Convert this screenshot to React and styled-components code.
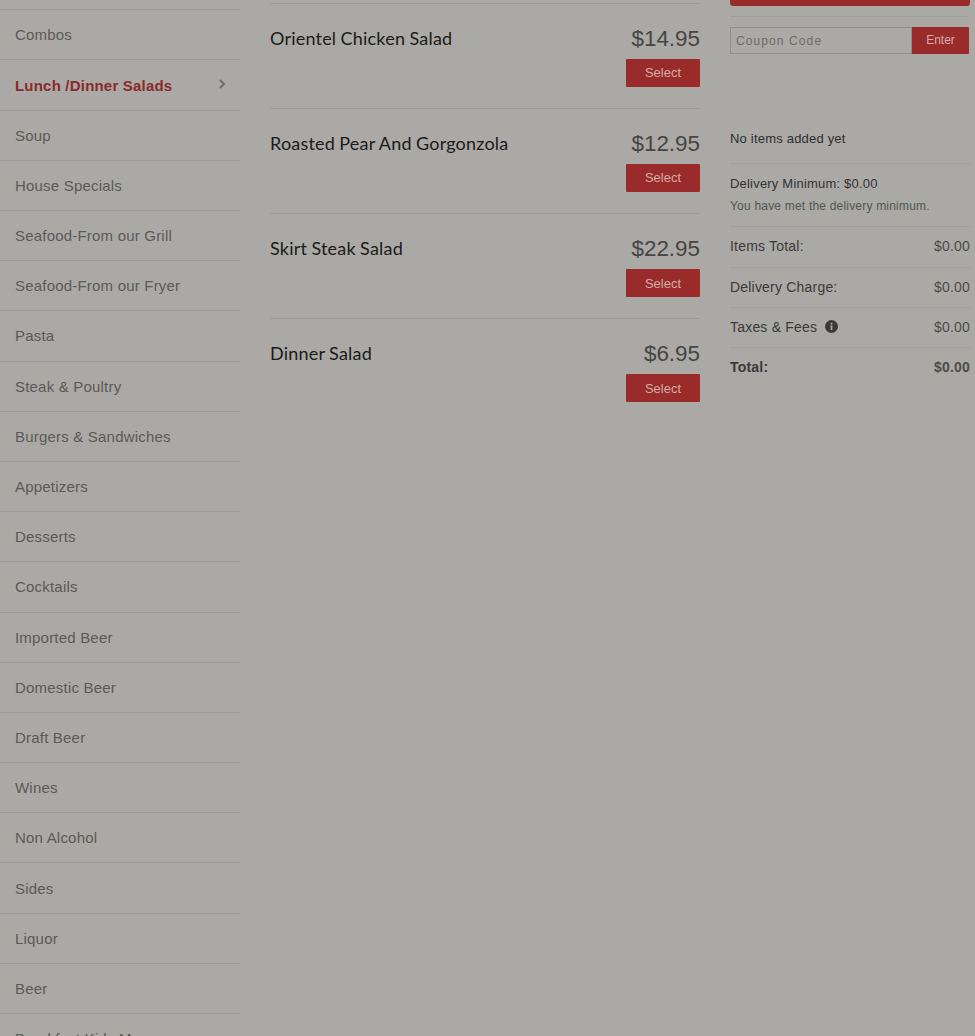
import React from "react";
import styled, { createGlobalStyle } from "styled-components";

const Global = createGlobalStyle`
  html, body { margin: 0; padding: 0; height: 1036px; overflow: hidden; background: #aaa9a5; }
  body { font-family: "Liberation Sans", Arial, sans-serif; }
`;

const Page = styled.div`
  display: flex;
  align-items: flex-start;
  height: 1036px;
  overflow: hidden;
`;

const Sidebar = styled.nav`
  flex: 0 0 240px;
  padding-top: 9.3px;
`;

const NavRow = styled.div`
  display: flex;
  align-items: center;
  justify-content: space-between;
  box-sizing: border-box;
  height: 50.19px;
  padding: 0 13px 0.12px 15px;
  border-top: 1px solid #9e9d99;
  font-size: 15px;
  letter-spacing: 0.2px;
  color: ${(p) => (p.$active ? "#8a2a2b" : "#5a5a58")};
  font-weight: ${(p) => (p.$active ? 700 : 400)};
`;

const Chevron = styled.svg`
  width: 10px;
  height: 10px;
  margin-top: -3px;
`;

const Menu = styled.main`
  flex: 0 0 430px;
  margin-left: 30px;
  padding-top: 2.8px;
`;

const Dish = styled.article`
  display: flex;
  justify-content: space-between;
  box-sizing: border-box;
  height: 105.2px;
  padding-top: 20px;
  border-top: 1px solid #9e9d99;
`;

const DishName = styled.h3`
  margin: 0;
  font-family: Lato, sans-serif;
  font-size: 18px;
  line-height: 28px;
  font-weight: 400;
  letter-spacing: 0.2px;
  word-spacing: -0.5px;
  color: #1b1b1b;
`;

const DishBuy = styled.div`
  display: flex;
  flex-direction: column;
  align-items: flex-end;
  gap: 6px;
`;

const Price = styled.div`
  padding-top: 1px;
  font-size: 22.4px;
  line-height: 28px;
  color: #454543;
`;

const SelectButton = styled.button`
  width: 74px;
  height: 28px;
  padding: 0 0 0.2px;
  border: 0;
  border-radius: 1px;
  background: #992c2a;
  color: #d4aca8;
  font-family: inherit;
  font-size: 13px;
`;

const Cart = styled.aside`
  flex: 0 0 240px;
  margin-left: 30px;
`;

const CheckoutStub = styled.div`
  height: 6px;
  background: #992c2a;
  border-radius: 0 0 3px 3px;
`;

const CouponBlock = styled.div`
  display: flex;
  margin-top: 10px;
  padding-top: 10px;
  border-top: 1px solid #a09f9b;
  width: 239px;
`;

const CouponInput = styled.div`
  flex: 1;
  box-sizing: border-box;
  height: 27px;
  padding-left: 5px;
  border: 1px solid #8f8e8a;
  font-size: 12px;
  line-height: 26px;
  letter-spacing: 1.1px;
  color: #6e6d6a;
`;

const EnterButton = styled.button`
  width: 57px;
  height: 27px;
  padding: 0 0 2px;
  border: 0;
  border-radius: 0 1px 1px 0;
  background: #992c2a;
  color: #d4aca8;
  font-family: inherit;
  font-size: 12px;
`;

const Empty = styled.div`
  margin-top: 76px;
  height: 33px;
  border-bottom: 1px solid #a09f9b;
  font-size: 13px;
  line-height: 17px;
  letter-spacing: 0.2px;
  color: #2e2e2d;
`;

const Minimum = styled.div`
  box-sizing: border-box;
  height: 63.4px;
  padding-top: 11px;
  border-bottom: 1px solid #a09f9b;
  font-size: 13px;
  line-height: 17px;
  letter-spacing: 0.2px;
  color: #333332;
`;

const MinimumNote = styled.div`
  margin-top: 6px;
  font-size: 12px;
  line-height: 16px;
  color: #4b5a4b;
`;

const TotalRow = styled.div`
  display: flex;
  align-items: center;
  justify-content: space-between;
  box-sizing: border-box;
  height: 40.2px;
  padding-bottom: ${(p) => (p.$last ? "2px" : "1.2px")};
  border-bottom: ${(p) => (p.$last ? "0" : "1px solid #a09f9b")};
  font-size: 14px;
  letter-spacing: 0.2px;
  color: #3a3a39;
  font-weight: ${(p) => (p.$bold ? 700 : 400)};
`;

const Label = styled.span`
  display: flex;
  align-items: center;
  gap: 8px;
`;

const Amount = styled.span`
  color: #4c4c4a;
  font-weight: inherit;
`;

const InfoIcon = styled.svg`
  width: 13px;
  height: 13px;
`;

const categories = [
  "Combos", "Lunch /Dinner Salads", "Soup", "House Specials", "Seafood-From our Grill",
  "Seafood-From our Fryer", "Pasta", "Steak & Poultry", "Burgers & Sandwiches", "Appetizers",
  "Desserts", "Cocktails", "Imported Beer", "Domestic Beer", "Draft Beer", "Wines",
  "Non Alcohol", "Sides", "Liquor", "Beer", "Breakfast Kids Menu",
];

const dishes = [
  ["Orientel Chicken Salad", "$14.95"],
  ["Roasted Pear And Gorgonzola", "$12.95"],
  ["Skirt Steak Salad", "$22.95"],
  ["Dinner Salad", "$6.95"],
];

export default function App() {
  return (
    <>
      <Global />
      <Page>
        <Sidebar>
          {categories.map((c) => {
            const active = c.startsWith("Lunch");
            return (
              <NavRow key={c} $active={active}>
                {c}
                {active && (
                  <Chevron viewBox="0 0 10 10">
                    <path d="M3 1l4 4-4 4" fill="none" stroke="#6f6e6b" strokeWidth="2" />
                  </Chevron>
                )}
              </NavRow>
            );
          })}
        </Sidebar>
        <Menu>
          {dishes.map(([name, price]) => (
            <Dish key={name}>
              <DishName>{name}</DishName>
              <DishBuy>
                <Price>{price}</Price>
                <SelectButton>Select</SelectButton>
              </DishBuy>
            </Dish>
          ))}
        </Menu>
        <Cart>
          <CheckoutStub />
          <CouponBlock>
            <CouponInput>Coupon Code</CouponInput>
            <EnterButton>Enter</EnterButton>
          </CouponBlock>
          <Empty>No items added yet</Empty>
          <Minimum>
            Delivery Minimum: $0.00
            <MinimumNote>You have met the delivery minimum.</MinimumNote>
          </Minimum>
          <TotalRow><Label>Items Total:</Label><Amount>$0.00</Amount></TotalRow>
          <TotalRow><Label>Delivery Charge:</Label><Amount>$0.00</Amount></TotalRow>
          <TotalRow>
            <Label>
              Taxes &amp; Fees
              <InfoIcon viewBox="0 0 13 13">
                <circle cx="6.5" cy="6.5" r="6.5" fill="#3a3a39" />
                <rect x="5.6" y="5.4" width="1.8" height="4.6" fill="#aaa9a5" />
                <rect x="5.6" y="2.8" width="1.8" height="1.7" fill="#aaa9a5" />
              </InfoIcon>
            </Label>
            <Amount>$0.00</Amount>
          </TotalRow>
          <TotalRow $bold $last><Label>Total:</Label><Amount>$0.00</Amount></TotalRow>
        </Cart>
      </Page>
    </>
  );
}
